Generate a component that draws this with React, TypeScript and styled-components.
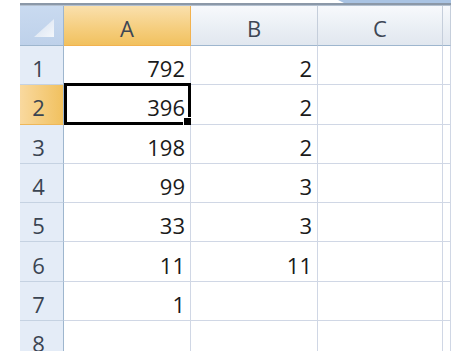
import React from 'react';
import styled, { createGlobalStyle } from 'styled-components';

const GlobalStyle = createGlobalStyle`
  html, body {
    margin: 0;
    padding: 0;
    background: #fff;
    overflow: hidden;
  }
  body {
    font-family: 'Open Sans', 'Liberation Sans', sans-serif;
  }
`;

const Page = styled.div`
  width: 451px;
  height: 351px;
  overflow: hidden;
  display: flex;
  flex-direction: column;
`;

const TopStrip = styled.div`
  position: relative;
  height: 13px;
  margin-left: 20px;
  display: flex;
  flex-direction: column;
`;

const RibbonEdge = styled.div`
  height: 3px;
  background: #fff;
`;

const RibbonLine = styled.div`
  height: 2px;
  background: #8b98a8;
`;

const FormulaGap = styled.div`
  flex: 1;
  background: linear-gradient(#eef2f7, #dce4ee);
  border-bottom: 1px solid #b3c0d0;
`;

const Tab = styled.div`
  position: absolute;
  top: 0;
  left: 318px;
  right: 0;
  height: 3px;
  background: #a9c3e3;
  clip-path: polygon(0 0, 100% 0, 100% 100%, 6px 100%);
`;

const Sheet = styled.div`
  position: relative;
  margin-left: 20px;
  display: grid;
  grid-template-columns: 44px 127px 127px 125px 1fr;
  grid-template-rows: 40px repeat(8, 39.3px);
  color: #1a1a1a;
  font-size: 22px;
  font-weight: 500;
`;

const Corner = styled.div`
  position: relative;
  background: linear-gradient(#c9daf0, #bed1ea);
  border-right: 1px solid #9eb6ce;
  border-bottom: 1px solid #9eb6ce;
  box-sizing: border-box;
`;

const CornerMark = styled.div`
  position: absolute;
  right: 9px;
  bottom: 8px;
  width: 20px;
  height: 18px;
  background: linear-gradient(135deg, #d3dff0, #f4f7fb);
  clip-path: polygon(100% 0, 100% 100%, 0 100%);
`;

const ColHead = styled.div<{ $active?: boolean }>`
  box-sizing: border-box;
  display: flex;
  align-items: center;
  justify-content: center;
  padding-top: 4px;
  color: #3d4654;
  background: ${(p) =>
    p.$active
      ? 'linear-gradient(#fae0ad, #f5cd7c 60%, #f1c15f)'
      : 'linear-gradient(#f7f9fc, #e9eef4 60%, #e1e7ef)'};
  border-right: 1px solid ${(p) => (p.$active ? '#f2b24f' : '#c5cedb')};
  border-bottom: 1px solid ${(p) => (p.$active ? '#f2b24f' : '#9eb6ce')};
`;

const RowHead = styled.div<{ $active?: boolean }>`
  box-sizing: border-box;
  display: flex;
  align-items: center;
  justify-content: center;
  padding: 6px 6px 0 0;
  color: #3a4452;
  background: ${(p) =>
    p.$active ? 'linear-gradient(90deg, #f9d99f, #f1c15f)' : '#e4ecf7'};
  border-right: 1px solid #9eb6ce;
  border-bottom: 1px solid ${(p) => (p.$active ? '#eeb75a' : '#c5d2e2')};
`;

const Cell = styled.div`
  position: relative;
  box-sizing: border-box;
  display: flex;
  align-items: center;
  justify-content: flex-end;
  padding: 6px 5px 0 0;
  background: #fff;
  border-right: 1px solid #d0d7e5;
  border-bottom: 1px solid #d0d7e5;
`;

const Selection = styled.div`
  position: absolute;
  left: 0;
  top: -2px;
  right: -1px;
  bottom: -1px;
  border: 3px solid #000;
  pointer-events: none;
`;

const FillHandle = styled.div`
  position: absolute;
  right: -4px;
  bottom: -4px;
  width: 7px;
  height: 7px;
  background: #000;
  border: 1px solid #fff;
`;

const columns = ['A', 'B', 'C', 'D'];

const rows: (string | number)[][] = [
  [792, 2],
  [396, 2],
  [198, 2],
  [99, 3],
  [33, 3],
  [11, 11],
  [1, ''],
  ['', ''],
];

const activeRow = 1;

const App = () => (
  <Page>
    <GlobalStyle />
    <TopStrip>
      <RibbonEdge />
      <RibbonLine />
      <FormulaGap />
      <Tab />
    </TopStrip>
    <Sheet>
      <Corner>
        <CornerMark />
      </Corner>
      {columns.map((c, i) => (
        <ColHead key={c} $active={i === 0}>
          {i < 3 ? c : ''}
        </ColHead>
      ))}
      {rows.map((r, ri) => (
        <React.Fragment key={ri}>
          <RowHead $active={ri === activeRow}>{ri + 1}</RowHead>
          {columns.map((c, ci) => (
            <Cell key={c}>
              {r[ci] ?? ''}
              {ri === activeRow && ci === 0 && (
                <Selection>
                  <FillHandle />
                </Selection>
              )}
            </Cell>
          ))}
        </React.Fragment>
      ))}
    </Sheet>
  </Page>
);

export default App;
